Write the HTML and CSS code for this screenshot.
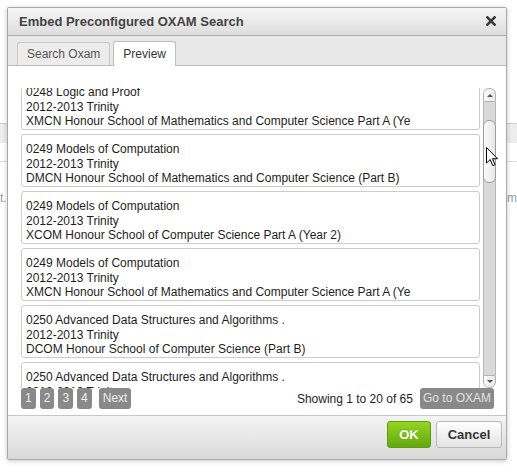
FILE: index.html
```html
<!DOCTYPE html>
<html>
<head>
<meta charset="utf-8">
<title>Embed Preconfigured OXAM Search</title>
<link rel="stylesheet" href="styles.css">
</head>
<body>
<div class="page">
  <div class="bg-band"></div>
  <div class="bg-line"></div>
  <div class="bg-text"><span>t.</span><span>om</span></div>
</div>

<div class="dialog">
  <div class="titlebar">
    <span class="title">Embed Preconfigured OXAM Search</span>
    <svg class="close" width="10" height="10" viewBox="0 0 10 10"><path d="M1.4 1.4L8.6 8.6M8.6 1.4L1.4 8.6" stroke="#3a3a3a" stroke-width="2.6" stroke-linecap="square"/></svg>
  </div>
  <div class="tabs">
    <div class="tab">Search Oxam</div>
    <div class="tab active">Preview</div>
  </div>
  <div class="content">
    <div class="viewport">
      <div class="list">
        <div class="items">
          <div class="item"><div>0248 Logic and Proof</div><div>2012-2013 Trinity</div><div>XMCN Honour School of Mathematics and Computer Science Part A (Ye</div></div>
          <div class="item"><div>0249 Models of Computation</div><div>2012-2013 Trinity</div><div>DMCN Honour School of Mathematics and Computer Science (Part B)</div></div>
          <div class="item"><div>0249 Models of Computation</div><div>2012-2013 Trinity</div><div>XCOM Honour School of Computer Science Part A (Year 2)</div></div>
          <div class="item"><div>0249 Models of Computation</div><div>2012-2013 Trinity</div><div>XMCN Honour School of Mathematics and Computer Science Part A (Ye</div></div>
          <div class="item"><div>0250 Advanced Data Structures and Algorithms .</div><div>2012-2013 Trinity</div><div>DCOM Honour School of Computer Science (Part B)</div></div>
          <div class="item"><div>0250 Advanced Data Structures and Algorithms .</div><div>2012-2013 Trinity</div><div>XCOM Honour School of Computer Science Part A (Year 2)</div></div>
        </div>
      </div>
      <div class="scrollbar">
        <div class="sb-btn sb-up"><span class="arr-up"></span></div>
        <div class="sb-track"><div class="sb-thumb"></div></div>
        <div class="sb-btn sb-down"><span class="arr-down"></span></div>
      </div>
    </div>
    <div class="pager">
      <div class="pages">
        <span class="pg">1</span>
        <span class="pg">2</span>
        <span class="pg">3</span>
        <span class="pg">4</span>
        <span class="pg next">Next</span>
      </div>
      <div class="info">
        <span class="showing">Showing 1 to 20 of 65</span>
        <span class="pg goto">Go to OXAM</span>
      </div>
    </div>
  </div>
  <div class="footer">
    <button class="btn ok">OK</button>
    <button class="btn cancel">Cancel</button>
  </div>
</div>

<svg class="cursor" width="13" height="20" viewBox="0 0 13 20"><path d="M0.5 0.5L0.5 16L4.2 12.5L6.8 18.6L9 17.7L6.5 11.7L11.5 11.7Z" fill="#fff" stroke="#000" stroke-width="1" stroke-linejoin="round"/></svg>
</body>
</html>
```

FILE: styles.css
```css
html, body {
  margin: 0;
  padding: 0;
}
body {
  background: #fff;
  font-family: "Liberation Sans", Arial, sans-serif;
  width: 517px;
  height: 472px;
  overflow: hidden;
  position: relative;
}

/* background page peeking behind the modal */
.page {
  padding-top: 123px;
}
.bg-band {
  height: 19px;
  border-top: 1px solid #cfcfcf;
  background: #ededed;
}
.bg-line {
  height: 18px;
  border-bottom: 1px solid #dcdcdc;
}
.bg-text {
  display: flex;
  justify-content: space-between;
  padding-top: 29px;
  font-size: 12px;
  line-height: 14px;
  color: #9a9a9a;
}

/* modal dialog */
.dialog {
  position: absolute;
  left: 7px;
  top: 7px;
  width: 500px;
  height: 453px;
  box-sizing: border-box;
  border: 1px solid #a9a9a9;
  border-radius: 2px;
  background: #fff;
  box-shadow: 0 1px 5px rgba(0, 0, 0, 0.22);
  display: flex;
  flex-direction: column;
  overflow: hidden;
}

.titlebar {
  height: 27px;
  flex: none;
  border-bottom: 1px solid #adadad;
  background: linear-gradient(#f7f7f7, #dddddd);
  display: flex;
  align-items: center;
  justify-content: space-between;
  padding: 0 10px 0 11px;
}
.title {
  font-weight: bold;
  font-size: 13px;
  color: #444;
}
.close {
  display: block;
  margin-top: -2px;
}

.tabs {
  height: 29px;
  flex: none;
  border-bottom: 1px solid #bcbcbc;
  background: #e8e8e8;
  display: flex;
  align-items: flex-end;
  gap: 3px;
  padding-left: 9px;
}
.tab {
  height: 23px;
  box-sizing: border-box;
  border: 1px solid #c9c9c9;
  border-bottom: none;
  border-radius: 3px 3px 0 0;
  background: #ececec;
  padding: 0 9px;
  font-size: 12px;
  line-height: 22px;
  color: #555;
}
.tab.active {
  height: 25px;
  margin-bottom: -1px;
  background: #fff;
  border-color: #bcbcbc;
  color: #333;
  line-height: 24px;
}

.content {
  flex: 1;
  padding: 22px 10px 0 13px;
  display: flex;
  flex-direction: column;
}
.viewport {
  height: 300px;
  display: flex;
  gap: 3px;
}
.list {
  flex: 1;
  overflow: hidden;
}
.items {
  margin-top: -11px;
  display: flex;
  flex-direction: column;
  gap: 4px;
}
.item {
  height: 53px;
  flex: none;
  box-sizing: border-box;
  border: 1px solid #cccccc;
  border-radius: 3px;
  padding: 7px 4px 0;
  font-size: 12px;
  line-height: 14.6px;
  color: #1e1e1e;
  white-space: nowrap;
  overflow: hidden;
}

.scrollbar {
  width: 13px;
  flex: none;
  display: flex;
  flex-direction: column;
}
.sb-btn {
  height: 14px;
  box-sizing: border-box;
  border: 1px solid #b3b3b3;
  background: linear-gradient(to right, #fbfbfb, #e8e8e8);
  display: flex;
  align-items: center;
  justify-content: center;
}
.sb-up {
  border-radius: 6px 6px 0 0;
}
.sb-down {
  height: 13px;
  border-radius: 0 0 6px 6px;
}
.arr-up {
  width: 0;
  height: 0;
  border-left: 3px solid transparent;
  border-right: 3px solid transparent;
  border-bottom: 3px solid #555;
}
.arr-down {
  width: 0;
  height: 0;
  border-left: 3px solid transparent;
  border-right: 3px solid transparent;
  border-top: 3px solid #555;
}
.sb-track {
  flex: 1;
  background: #d9d9d9;
  border-left: 1px solid #b6b6b6;
  border-right: 1px solid #b6b6b6;
  padding-top: 18px;
}
.sb-thumb {
  height: 63px;
  box-sizing: border-box;
  margin: 0 -1px;
  border: 1px solid #9d9d9d;
  border-radius: 6px;
  background: linear-gradient(to right, #fbfbfb, #e7e7e7);
}

.pager {
  height: 21px;
  display: flex;
  align-items: center;
  justify-content: space-between;
  margin-right: 2px;
}
.pages {
  display: flex;
  gap: 4px;
}
.pg {
  display: block;
  height: 21px;
  line-height: 21px;
  padding: 0 4px;
  border-radius: 3px;
  background: #898989;
  color: #eeeeee;
  font-size: 12px;
}
.pg.next {
  margin-left: 3px;
}
.info {
  display: flex;
  align-items: center;
  gap: 7px;
}
.showing {
  font-size: 12px;
  line-height: 21px;
  padding-top: 1px;
  color: #1e1e1e;
}
.pg.goto {
  padding: 0 3px;
  color: #e2e2e2;
}

.footer {
  height: 38px;
  flex: none;
  border-top: 1px solid #c7c7c7;
  background: linear-gradient(#f4f4f4, #d9d9d9);
  display: flex;
  justify-content: flex-end;
  align-items: flex-start;
  gap: 5px;
  padding: 5px 4px 0 0;
  box-sizing: content-box;
}
.btn {
  height: 27px;
  box-sizing: border-box;
  border-radius: 3px;
  font-family: "Liberation Sans", Arial, sans-serif;
  font-weight: bold;
  font-size: 13px;
  padding: 0;
  margin: 0;
}
.ok {
  width: 44px;
  border: 1px solid #5e9c16;
  background: linear-gradient(#93d621, #64a70d);
  color: #fff;
  text-shadow: 0 -1px 0 rgba(0, 0, 0, 0.15);
}
.cancel {
  width: 66px;
  border: 1px solid #b9b9b9;
  background: linear-gradient(#ffffff, #e3e3e3);
  color: #333;
}

.cursor {
  position: absolute;
  left: 486px;
  top: 147px;
}
```
